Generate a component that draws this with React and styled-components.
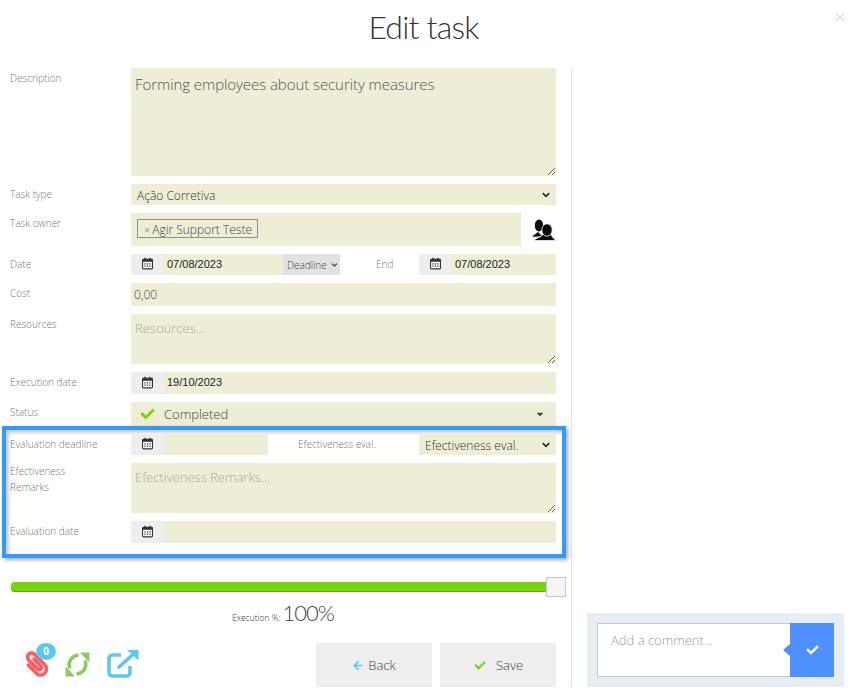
import React from "react";
import styled, { createGlobalStyle } from "styled-components";
import { FaCheck, FaChevronDown, FaArrowLeft, FaPaperclip, FaCaretDown } from "react-icons/fa";

const Global = createGlobalStyle`
  html, body { margin: 0; padding: 0; background: #fff; }
  body { font-family: "Open Sans", "Noto Sans", sans-serif; color: #444; }
  * { box-sizing: border-box; }
`;

const FIELD = "#eeeed6";

const Page = styled.div`
  position: relative;
  width: 856px;
  height: 698px;
  overflow: hidden;
`;
const Header = styled.header`
  height: 68px;
  display: flex;
  justify-content: center;
  padding: 5px 9px 0 0;
`;
const Title = styled.h1`
  margin: 0;
  font-family: "Lato", "Open Sans", sans-serif;
  font-size: 32px;
  letter-spacing: -0.8px;
  line-height: 44px;
  font-weight: 300;
  color: #333;
`;
const Close = styled.svg`
  position: absolute;
  top: 12px;
  right: 11px;
  width: 10px;
  height: 10px;
  stroke: #cfcfcf;
  stroke-width: 1;
  fill: none;
`;
const Body = styled.div`
  display: grid;
  grid-template-columns: 572px 1fr;
`;
const Left = styled.div`
  height: 619px;
  border-right: 1px solid #e2e2e2;
  padding: 0 15px 0 10px;
  display: flex;
  flex-direction: column;
  gap: 8px;
`;
const Right = styled.div`
  display: flex;
  align-items: flex-end;
  padding: 0 12px 0 15px;
  height: 619px;
`;
const Row = styled.div`
  display: grid;
  grid-template-columns: 121px 1fr;
  align-items: start;
`;
const StatusRow = styled(Row)`
  margin-bottom: -8px;
`;
const Label = styled.label`
  font-size: 10px;
  line-height: 16px;
  font-weight: 300;
  color: #777;
  padding-top: ${p => p.$pt ?? 2}px;
`;
const InlineLabel = styled(Label)`
  width: ${p => p.$w}px;
  padding-left: ${p => p.$pl}px;
  padding-top: 0;
  padding-bottom: 2px;
  flex: none;
`;
const Area = styled.textarea`
  display: block;
  width: 100%;
  height: ${p => p.$h}px;
  border: 0;
  outline: 0;
  background: ${FIELD};
  padding: ${p => (p.$big ? "6px 4px" : "4px 4px")};
  font-family: inherit;
  font-size: ${p => (p.$big ? "15px" : "13px")};
  letter-spacing: ${p => (p.$big ? "-0.07px" : "0")};
  line-height: 20px;
  font-weight: 300;
  color: #555;
  resize: vertical;
  &::placeholder { color: #a9a99a; opacity: 1; }
`;
const Select = styled.div`
  height: 21px;
  flex: 1;
  background: ${FIELD};
  display: flex;
  align-items: center;
  justify-content: space-between;
  padding: 1px 5px 0 6px;
  font-size: 12px;
  font-weight: 300;
  color: #333;
`;
const Chevron = styled(FaChevronDown)`
  width: 10px;
  height: 8px;
  color: #111;
  stroke: #111;
  stroke-width: 20;
`;
const OwnerWrap = styled.div`
  display: flex;
  align-items: center;
  gap: 10px;
`;
const OwnerField = styled.div`
  flex: 1;
  height: 33px;
  background: ${FIELD};
  padding: 6px;
  display: flex;
  align-items: flex-start;
`;
const Tag = styled.span`
  display: inline-flex;
  align-items: center;
  height: 19px;
  padding: 1px 5px 0 6px;
  border: 1px solid #8f8f8f;
  font-size: 12px;
  font-weight: 300;
  color: #444;
`;
const TimesMark = styled.span`
  font-size: 11px;
  color: #666;
  margin-right: 2px;
`;
const DateGroup = styled.div`
  display: flex;
  align-items: stretch;
  height: ${p => p.$h || 21}px;
  width: ${p => (p.$w ? `${p.$w}px` : "auto")};
  flex: ${p => (p.$w ? "none" : "1")};
`;
const Addon = styled.span`
  width: 33px;
  flex: none;
  background: #eeeeee;
  display: flex;
  align-items: center;
  justify-content: center;
  padding-bottom: 2px;
`;
const DateInput = styled.div`
  flex: 1;
  background: ${FIELD};
  font-family: "Liberation Sans", Arial, sans-serif;
  font-size: 11px;
  line-height: 21px;
  color: #222;
  padding-left: 3px;
`;
const Inline = styled.div`
  display: flex;
  align-items: center;
`;
const DeadlineSel = styled.div`
  width: 57px;
  height: 21px;
  flex: none;
  background: #e2e2e2;
  display: flex;
  align-items: center;
  justify-content: space-between;
  padding: 0 2px 0 4px;
  font-size: 10px;
  font-weight: 300;
  color: #444;
`;
const SmallChev = styled(FaChevronDown)`
  width: 7px;
  height: 6px;
  color: #333;
  stroke: #333;
  stroke-width: 20;
`;
const CostField = styled.div`
  height: 23px;
  background: ${FIELD};
  padding-left: 3px;
  font-size: 12px;
  line-height: 23px;
  font-weight: 300;
  color: #444;
`;
const StatusField = styled.div`
  height: 24px;
  background: ${FIELD};
  display: flex;
  align-items: center;
  padding: 0 11px 0 8px;
  gap: 8px;
  font-size: 13px;
  font-weight: 300;
  color: #444;
`;
const StatusText = styled.span`
  flex: 1;
`;
const GreenCheck = styled(FaCheck)`
  width: 17px;
  height: 14px;
  color: #77d30a;
`;
const Caret = styled(FaCaretDown)`
  width: 10px;
  height: 10px;
  color: #444;
`;
const Highlight = styled.section`
  margin: 0 -10px 0 -8px;
  border: 4px solid #3399ff;
  padding: 4px 6px 11px 4px;
  box-shadow: 2px 2px 4px rgba(0,0,0,.35), inset 3px 3px 4px -1px rgba(0,0,0,.28);
  display: flex;
  flex-direction: column;
  gap: 8px;
  background: #fff;
  position: relative;
`;
const SliderWrap = styled.div`
  position: relative;
  margin-top: 11px;
  height: 20px;
  display: flex;
  align-items: center;
  padding-left: 1px;
`;
const Track = styled.div`
  width: 100%;
  height: 10px;
  border-radius: 4px;
  background: #77d30a;
  box-shadow: inset 0 -1px 0 #5fae08;
`;
const Handle = styled.span`
  position: absolute;
  right: -10px;
  top: 0;
  width: 20px;
  height: 20px;
  background: #f5f5f5;
  border: 1px solid #c8c8c8;
`;
const Progress = styled.div`
  text-align: center;
  margin-top: -6px;
  height: 36px;
  line-height: 28px;
  font-weight: 300;
`;
const ProgressLabel = styled.span`
  font-size: 8.5px;
  color: #333;
`;
const ProgressValue = styled.span`
  font-family: "Lato", "Open Sans", sans-serif;
  font-size: 22px;
  letter-spacing: -1px;
  color: #444;
  margin-left: 2px;
`;
const Footer = styled.div`
  display: flex;
  align-items: flex-start;
`;
const IconRow = styled.div`
  flex: 1;
  display: flex;
  align-items: center;
  gap: 17px;
  padding: 7px 0 0 16px;
`;
const ClipWrap = styled.span`
  position: relative;
  display: inline-flex;
`;
const Clip = styled(FaPaperclip)`
  width: 22px;
  height: 26px;
  color: #fb5a5f;
  stroke: #fb5a5f;
  stroke-width: 12;
  transform: scaleX(-1);
`;
const Badge = styled.span`
  position: absolute;
  top: -8px;
  right: -8px;
  width: 20px;
  height: 17px;
  border-radius: 50%;
  background: #5cc6f5;
  color: #fff;
  font-size: 10px;
  font-weight: 700;
  line-height: 17px;
  text-align: center;
`;
const Buttons = styled.div`
  display: flex;
  gap: 8px;
`;
const Btn = styled.button`
  width: 116px;
  height: 44px;
  border: 0;
  background: #eeeeee;
  display: flex;
  align-items: center;
  justify-content: center;
  gap: ${p => p.$gap}px;
  font-family: inherit;
  font-size: 13px;
  font-weight: 300;
  color: #444;
  padding: 0;
`;
const BackArrow = styled(FaArrowLeft)`
  width: 12px;
  height: 11px;
  color: #5cc6f5;
`;
const SaveCheck = styled(FaCheck)`
  width: 14px;
  height: 11px;
  color: #77d30a;
`;
const CommentPanel = styled.div`
  width: 257px;
  height: 74px;
  background: #e8edf2;
  padding: 10px;
  display: flex;
`;
const CommentInput = styled.textarea`
  flex: 1;
  min-width: 0;
  height: 54px;
  border: 1px solid #c8c8c8;
  border-right: 0;
  outline: 0;
  background: #fff;
  padding: 7px 13px;
  font-family: inherit;
  font-size: 13px;
  line-height: 18px;
  font-weight: 300;
  resize: none;
  &::placeholder { color: #9a9a9a; opacity: 1; }
`;
const Send = styled.button`
  position: relative;
  width: 44px;
  height: 54px;
  border: 0;
  padding: 0;
  background: #4d90fe;
  display: flex;
  align-items: center;
  justify-content: center;
  color: #fff;
  &::before {
    content: "";
    position: absolute;
    left: -7px;
    top: 21px;
    border-style: solid;
    border-width: 6px 7px 6px 0;
    border-color: transparent #4d90fe transparent transparent;
  }
`;
const SendCheck = styled(FaCheck)`
  width: 15px;
  height: 12px;
`;

const Cal = () => (
  <Addon>
    <svg width="11" height="13" viewBox="0 0 12 13">
      <rect x=".6" y="2" width="10.8" height="10.4" rx="1" fill="#fff" stroke="#333" strokeWidth="1.2" />
      <rect x=".6" y="2" width="10.8" height="2.6" fill="#333" />
      <rect x="2.4" y=".3" width="1.6" height="3" fill="#333" />
      <rect x="8" y=".3" width="1.6" height="3" fill="#333" />
      <path d="M2.6 6.2h1.4v1.3H2.6zM5.3 6.2h1.4v1.3H5.3zM8 6.2h1.4v1.3H8zM2.6 8.8h1.4v1.3H2.6zM5.3 8.8h1.4v1.3H5.3zM8 8.8h1.4v1.3H8z" fill="#333" />
    </svg>
  </Addon>
);

const UsersIcon = () => (
  <svg width="25" height="24" viewBox="0 0 25 24" fill="#0a0a0a">
    <ellipse cx="8" cy="7.5" rx="4.2" ry="6" />
    <path d="M1 18.5L7 14l4 4-6 .8z" />
    <path d="M2.8 22.5c3-3 7-3 9.2-6h8c1 3 3.6 4 4.6 6z" stroke="#fff" strokeWidth=".7" />
    <ellipse cx="16" cy="12" rx="5.2" ry="6.2" stroke="#fff" strokeWidth=".8" />
  </svg>
);

const SyncIcon = () => (
  <svg width="25" height="25" viewBox="0 0 25 25" fill="none">
    <path d="M13.5 3.2A9.5 9.5 0 0 0 5 16.5" stroke="#8fc964" strokeWidth="3.6" />
    <path d="M11.5 21.8A9.5 9.5 0 0 0 20 8.5" stroke="#8fc964" strokeWidth="3.6" />
    <path d="M.6 24.4h9.4L.6 14.4zM24.4.6H15l9.4 10z" fill="#8fc964" />
  </svg>
);

const ExternalIcon = () => (
  <svg width="32" height="28" viewBox="0 0 32 28" fill="none" stroke="#5cc6f5">
    <path d="M14 5H5.5A3.5 3.5 0 0 0 2 8.5V22.5A3.5 3.5 0 0 0 5.5 26H19.5A3.5 3.5 0 0 0 23 22.5V16" strokeWidth="3.6" />
    <path d="M12 17L26 4.5" strokeWidth="3.6" strokeLinecap="round" />
    <path d="M20 0H31.5V10.5z" fill="#5cc6f5" stroke="none" />
  </svg>
);

export default function App() {
  return (
    <Page>
      <Global />
      <Header>
        <Title>Edit task</Title>
        <Close viewBox="0 0 10 10"><path d="M.5.5l9 9M9.5.5l-9 9" /></Close>
      </Header>
      <Body>
        <Left>
          <Row>
            <Label>Description</Label>
            <Area $big $h={108} readOnly defaultValue="Forming employees about security measures" />
          </Row>
          <Row>
            <Label>Task type</Label>
            <Select><span>Ação Corretiva</span><Chevron /></Select>
          </Row>
          <Row>
            <Label>Task owner</Label>
            <OwnerWrap>
              <OwnerField><Tag><TimesMark>×</TimesMark>Agir Support Teste</Tag></OwnerField>
              <UsersIcon />
            </OwnerWrap>
          </Row>
          <Row>
            <Label>Date</Label>
            <Inline>
              <DateGroup $w={152}><Cal /><DateInput>07/08/2023</DateInput></DateGroup>
              <DeadlineSel><span>Deadline</span><SmallChev /></DeadlineSel>
              <InlineLabel $w={79} $pl={36}>End</InlineLabel>
              <DateGroup><Cal /><DateInput>07/08/2023</DateInput></DateGroup>
            </Inline>
          </Row>
          <Row>
            <Label>Cost</Label>
            <CostField>0,00</CostField>
          </Row>
          <Row>
            <Label>Resources</Label>
            <Area $h={50} readOnly placeholder="Resources..." />
          </Row>
          <Row>
            <Label>Execution date</Label>
            <DateGroup $h={22}><Cal /><DateInput>19/10/2023</DateInput></DateGroup>
          </Row>
          <StatusRow>
            <Label>Status</Label>
            <StatusField><GreenCheck /><StatusText>Completed</StatusText><Caret /></StatusField>
          </StatusRow>
          <Highlight>
            <Row>
              <Label>Evaluation deadline</Label>
              <Inline>
                <DateGroup $w={137}><Cal /><DateInput /></DateGroup>
                <InlineLabel $w={151} $pl={30}>Efectiveness eval.</InlineLabel>
                <Select><span>Efectiveness eval.</span><Chevron /></Select>
              </Inline>
            </Row>
            <Row>
              <Label $pt={0}>Efectiveness<br />Remarks</Label>
              <Area $h={50} readOnly placeholder="Efectiveness Remarks..." />
            </Row>
            <Row>
              <Label>Evaluation date</Label>
              <DateGroup $h={22}><Cal /><DateInput /></DateGroup>
            </Row>
          </Highlight>
          <SliderWrap><Track /><Handle /></SliderWrap>
          <Progress>
            <ProgressLabel>Execution %:</ProgressLabel>
            <ProgressValue>100%</ProgressValue>
          </Progress>
          <Footer>
            <IconRow>
              <ClipWrap><Clip /><Badge>0</Badge></ClipWrap>
              <SyncIcon />
              <ExternalIcon />
            </IconRow>
            <Buttons>
              <Btn $gap={4}><BackArrow />Back</Btn>
              <Btn $gap={9}><SaveCheck />Save</Btn>
            </Buttons>
          </Footer>
        </Left>
        <Right>
          <CommentPanel>
            <CommentInput readOnly placeholder="Add a comment..." />
            <Send><SendCheck /></Send>
          </CommentPanel>
        </Right>
      </Body>
    </Page>
  );
}
